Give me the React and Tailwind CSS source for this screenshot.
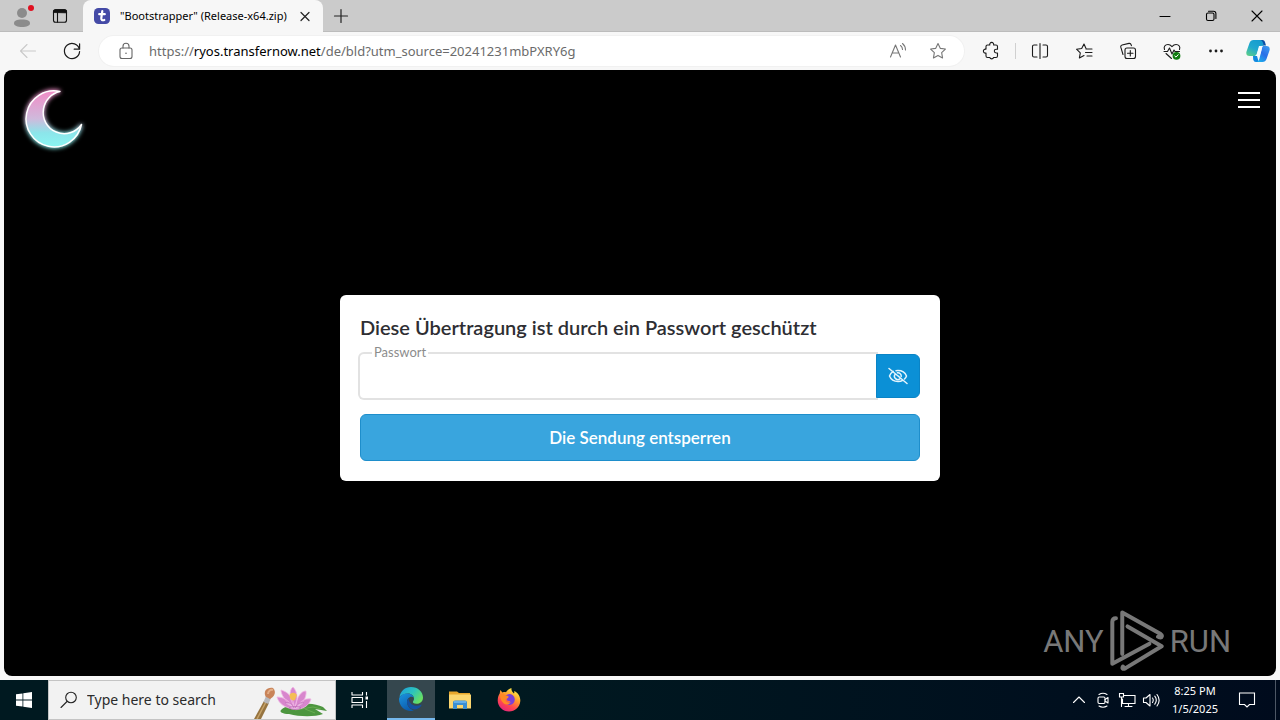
import React from 'react';

function Icon({ children, className = 'size-5', box = '0 0 20 20' }) {
  return (
    <svg
      viewBox={box}
      className={className}
      fill="none"
      stroke="currentColor"
      strokeWidth="1.1"
      strokeLinecap="round"
      strokeLinejoin="round"
      aria-hidden="true"
    >
      {children}
    </svg>
  );
}

function IconButton({ label, className = 'w-11', children }) {
  return (
    <button type="button" aria-label={label} className={`flex h-full shrink-0 items-center justify-center ${className}`}>
      {children}
    </button>
  );
}

function TabStrip() {
  return (
    <header className="flex h-8 shrink-0 bg-[#cbcbcb] shadow-[inset_0_-1px_0_#bcbcbc]">
      <div className="flex w-[83px] shrink-0 items-center pl-[3px]">
        <IconButton label="Profile" className="w-[38px]">
          <svg viewBox="-2 0 26 26" className="size-[26px]" aria-hidden="true">
            <circle cx="11" cy="10" r="5" fill="#8b8b8b" />
            <path d="M3 20.500c0-3 2.500-4 8-4s8 1 8 4c0 2.200-3.500 3.500-8 3.500s-8-1.300-8-3.500z" fill="#8b8b8b" />
            <circle cx="20" cy="5" r="3" fill="#e01020" />
          </svg>
        </IconButton>
        <IconButton label="Tab actions" className="w-[38px]">
          <Icon className="size-4" box="0 0 16 16">
            <rect x="1.500" y="1.800" width="13" height="12.400" rx="2" stroke="#111" />
            <path d="M1.500 4.500V3.800a2 2 0 0 1 2-2h9a2 2 0 0 1 2 2v.9z" fill="#111" stroke="#111" />
            <path d="M5.500 4v10" stroke="#111" />
          </Icon>
        </IconButton>
      </div>
      <div className="flex w-60 shrink-0 items-center rounded-t-lg bg-[#f7f7f7] pl-[11px]">
        <svg viewBox="0 0 16 16" className="size-4 shrink-0" aria-hidden="true">
          <rect width="16" height="16" rx="4.500" fill="#444aa6" />
          <path d="M8.300 3.200 7.300 10c-.3 2 1 2.700 3 2M5.200 6.200h5.600" fill="none" stroke="#fff" strokeWidth="2.200" strokeLinecap="round" />
        </svg>
        <span className="ml-[10px] w-[170px] overflow-hidden text-[11px] whitespace-nowrap text-black">
          "Bootstrapper" (Release-x64.zip)
        </span>
        <IconButton label="Close tab" className="w-9">
          <Icon className="size-3" box="0 0 12 12">
            <path d="M2 2.500l8 8M10 2.500l-8 8" stroke="#222" strokeWidth="1.200" />
          </Icon>
        </IconButton>
      </div>
      <IconButton label="New tab" className="w-9">
        <Icon className="size-4" box="0 0 16 16">
          <path d="M8 1.500v13M1.500 8h13" stroke="#222" strokeWidth="1.200" />
        </Icon>
      </IconButton>
      <div className="ml-auto flex text-black">
        <IconButton label="Minimize" className="w-[46px]">
          <Icon className="size-3" box="0 0 12 12"><path d="M1 6.500h10" /></Icon>
        </IconButton>
        <IconButton label="Restore" className="w-[46px]">
          <Icon className="size-3" box="0 0 12 12">
            <rect x="1.500" y="3" width="7.500" height="7.500" rx="1.500" />
            <path d="M3.500 1.200H8.500a2.400 2.400 0 0 1 2.400 2.400v4.800" />
          </Icon>
        </IconButton>
        <IconButton label="Close" className="w-[46px]">
          <Icon className="size-3" box="0 0 12 12"><path d="M1 1l10 10M11 1L1 11" /></Icon>
        </IconButton>
      </div>
    </header>
  );
}

const STAR = 'M10 2.600l2.250 4.750 5.150.7-3.750 3.650.9 5.200L10 14.400l-4.550 2.500.9-5.200L2.600 8.050l5.150-.7z';

function Toolbar() {
  return (
    <nav aria-label="Browser" className="flex h-[38px] shrink-0 items-center bg-[#f7f7f7] pr-0.5 pl-1.5 text-[#1b1b1b]">
      <IconButton label="Back">
        <Icon className="size-5 text-[#c9c9c9]"><path d="M17.500 10H2.500M9 3.500L2.500 10 9 16.500" /></Icon>
      </IconButton>
      <IconButton label="Refresh">
        <Icon>
          <path d="M17.400 8.200A7.600 7.600 0 1 0 17.600 10.500M17.600 2.800v5.400h-5.400" strokeWidth="1.200" />
        </Icon>
      </IconButton>
      <div className="ml-[5px] flex h-[30px] min-w-0 flex-1 items-center rounded-full bg-white pl-[17px] shadow-[0_0_0_1px_#f1f1f1]">
        <Icon className="size-5 shrink-0 text-[#666]">
          <rect x="4" y="7" width="12" height="10.500" rx="2" />
          <path d="M7 7V5.200a3 3 0 0 1 6 0V7" />
          <circle cx="10" cy="12.200" r=".8" fill="currentColor" stroke="none" />
        </Icon>
        <div className="relative ml-[13px] min-w-0 flex-1 text-[13px] leading-5">
          <input
            aria-label="Address"
            defaultValue="https://ryos.transfernow.net/de/bld?utm_source=20241231mbPXRY6g"
            className="block w-full bg-transparent text-transparent caret-black outline-none"
          />
          <div aria-hidden="true" className="pointer-events-none absolute inset-0 overflow-hidden whitespace-nowrap text-[#6b6b6b]">
            https://<span className="text-black">ryos.transfernow.net</span>/de/bld?utm_source=20241231mbPXRY6g
          </div>
        </div>
        <IconButton label="Read aloud" className="w-10">
          <Icon className="size-5 text-[#777]">
            <path d="M2.500 16L7.500 4l5 12M4.300 12h6.400M12.500 4.500q2 1.500 2 4M14.500 2.500q3 2.500 3 6.500" />
          </Icon>
        </IconButton>
        <IconButton label="Add to favorites" className="mr-1.5 w-10">
          <Icon className="size-5 text-[#777]"><path d={STAR} /></Icon>
        </IconButton>
      </div>
      <div className="ml-[5px] flex h-full items-center">
        <IconButton label="Extensions">
          <Icon>
            <path d="M6.500 4h2.300a2 2 0 1 1 3.800 0H15a1.500 1.500 0 0 1 1.500 1.500v2.700h-1.300a1.900 1.900 0 0 0 0 3.800h1.300v3a1.500 1.500 0 0 1-1.500 1.500h-2.400a2 2 0 0 1-3.800 0H6.500A1.500 1.500 0 0 1 5 15v-3a2 2 0 1 1 0-3.800V5.500A1.500 1.500 0 0 1 6.500 4z" />
          </Icon>
        </IconButton>
        <span className="mx-0.5 h-4 w-px bg-[#d0d0d0]" />
        <IconButton label="Split screen">
          <Icon><path d="M7 4H4a1.500 1.500 0 0 0-1.500 1.500v9A1.500 1.500 0 0 0 4 16h3M13 4h3a1.500 1.500 0 0 1 1.500 1.500v9A1.500 1.500 0 0 1 16 16h-3M10 2.500v15" /></Icon>
        </IconButton>
        <IconButton label="Favorites">
          <Icon><path d="M12 7.500L10 3 7.700 7.500l-5.200.7 3.800 3.600-.9 5.100L10 14.500M12 8h6M11.500 11.500H18M13 15h5" /></Icon>
        </IconButton>
        <IconButton label="Collections">
          <Icon>
            <rect x="7" y="7" width="10.500" height="10.500" rx="2" />
            <path d="M12.300 9.500v5.500M9.500 12.300H15M5 13.500L2.800 6.200a1.800 1.800 0 0 1 1.300-2.200l6.900-1.600a2 2 0 0 1 2.200 1.400l.2.800" />
          </Icon>
        </IconButton>
        <IconButton label="Browser essentials">
          <Icon>
            <path d="M2.500 8.500C1.500 6 3 3.500 6 3.500c2 0 3 1 4 2.200 1-1.200 2-2.200 4-2.200 3 0 4.500 2.500 3.500 5M4 12.500L9.500 17.500M2 10.500h3.500l2-3.500 2.500 6 2-4 1 1.500h4.500" />
            <circle cx="14.500" cy="14.800" r="3.900" fill="#107c10" stroke="none" />
            <path d="M12.800 15l1.200 1.100 2.200-2.400" stroke="#fff" strokeWidth="1" />
          </Icon>
        </IconButton>
        <IconButton label="Settings and more">
          <Icon>
            <g fill="currentColor" stroke="none">
              <circle cx="4.500" cy="10" r="1.400" /><circle cx="10" cy="10" r="1.400" /><circle cx="15.500" cy="10" r="1.400" />
            </g>
          </Icon>
        </IconButton>
        <IconButton label="Copilot" className="w-10">
          <svg viewBox="0 0 24 24" className="size-6" aria-hidden="true">
            <defs>
              <linearGradient id="cpA" x1="0.700" y1="0" x2="0.100" y2="1">
                <stop offset="0" stopColor="#169ccf" /><stop offset="0.500" stopColor="#20a8cf" /><stop offset="1" stopColor="#5ccf87" />
              </linearGradient>
              <linearGradient id="cpB" x1="0.900" y1="0" x2="0.200" y2="1">
                <stop offset="0" stopColor="#3d9cf0" /><stop offset="0.500" stopColor="#2a6fe8" /><stop offset="1" stopColor="#1bb2ec" />
              </linearGradient>
            </defs>
            <path d="M13 1h3.500a2.500 2.500 0 0 1 2.400 1.800L20 6.500h-4.500z" fill="#0b4fa5" />
            <path d="M7.500 1H14c1.800 0 2.500 1.500 3 3l.8 2.500c-3 0-4.500 1-5.300 3.500l-1.300 4.500c-.6 2-1.500 2.500-3 2.500H3.500C.8 17-.2 15 .5 12.500l3-8.500C4.200 2 5.500 1 7.500 1z" fill="url(#cpA)" />
            <path d="M7 17h4l1 3.500c.5 1.500.8 2 1.500 2.500H10c-1.500 0-2.300-.8-2.800-2.500z" fill="#1289e0" />
            <path d="M16.500 7H20.500c2.700 0 3.700 2 3 4.500l-3 8.500c-.7 2-2 3-4 3H10c2 0 2.800-1 3.300-3l2.200-8.500c.5-2 .5-3.500 1-4.500z" fill="url(#cpB)" />
            <path d="M13 7h4c-1 1-1.200 2.500-1.800 4.500l-1 3.500c-.5 1.500-1.500 2-3 2H9c1.500-1 1.800-2 2.300-4z" fill="#f4fbff" />
          </svg>
        </IconButton>
      </div>
    </nav>
  );
}

function MoonLogo() {
  const d = 'M60 91.500A28 28 0 1 0 81.500 124.500A21 21 0 0 1 43.500 109A21 21 0 0 1 60 91.500z';
  return (
    <svg viewBox="18 84 72 72" className="size-[72px]" role="img" aria-label="Moon logo">
      <defs>
        <linearGradient id="moon" x1="0" y1="0" x2="0" y2="1">
          <stop offset="0.050" stopColor="#ee90c8" />
          <stop offset="0.500" stopColor="#cfbadc" />
          <stop offset="0.750" stopColor="#8ce5ea" />
          <stop offset="1" stopColor="#8af5f2" />
        </linearGradient>
        <filter id="glow" x="-30%" y="-30%" width="160%" height="160%"><feGaussianBlur stdDeviation="2" /></filter>
      </defs>
      <path d={d} fill="url(#moon)" stroke="url(#moon)" strokeWidth="3" filter="url(#glow)" />
      <path d={d} fill="url(#moon)" stroke="#fff" strokeWidth="1.500" strokeLinejoin="round" />
    </svg>
  );
}

function PasswordCard() {
  return (
    <form onSubmit={(e) => e.preventDefault()} className="w-full max-w-[600px] rounded-md bg-white p-5 font-['Lato',sans-serif]">
      <h1 className="text-xl leading-6 font-semibold text-[#2e2e33]">Diese Übertragung ist durch ein Passwort geschützt</h1>
      <div className="relative mt-[15px] flex h-11">
        <input id="password" type="password" className="min-w-0 flex-1 rounded-l bg-white px-3 text-base ring-2 ring-[#e2e2e2] outline-none" />
        <label htmlFor="password" className="absolute -top-2.5 left-3 bg-white px-0.5 text-[13px] leading-4 text-[#8c8c8c]">Passwort</label>
        <button type="button" aria-label="Passwort anzeigen" className="relative flex w-11 items-center justify-center rounded-r-md border border-[#0a84c6] bg-[#0b90d6] text-[#e4f4fc]">
          <Icon className="size-5">
            <g strokeWidth="1.500">
              <path d="M5.200 5.300C3.500 6.400 2.200 8 1.500 10c1.500 3.700 4.700 5.500 8.500 5.500 1.800 0 3.400-.4 4.700-1.200M8 4.700A9 9 0 0 1 10 4.500c3.800 0 7 1.800 8.500 5.500-.4 1.100-1.100 2.100-2 3" />
              <path d="M7.200 8.200A3.300 3.300 0 0 0 12 12.700M9.500 6.800a3.300 3.300 0 0 1 3.700 3.700M9.500 9.500l1.500 1.200M1 2.500L19 17.500" />
            </g>
          </Icon>
        </button>
      </div>
      <button type="submit" className="mt-4 block h-[47px] w-full rounded-md border border-[#1e8ecb] bg-[#39a5de] text-[17px] font-semibold text-white">
        Die Sendung entsperren
      </button>
    </form>
  );
}

function Watermark() {
  return (
    <div className="pointer-events-none absolute right-[45px] bottom-1 flex items-center gap-1.5 font-['Roboto',sans-serif] text-[31px] leading-none text-[#787878]">
      <span>ANY</span>
      <svg viewBox="29 14 163 186" className="h-[62px] w-[54px]" fill="none" stroke="currentColor" strokeWidth="12" strokeLinejoin="round" strokeLinecap="round" aria-hidden="true">
        <path d="M47 38C39 38 36 41 36 49V176L148 115" />
        <path d="M66 146V21L182 86C188 90 186 97 179 96L174 94" />
        <path d="M82 63L185 123L76 189C67 194 65 189 68 184" />
      </svg>
      <span>RUN</span>
    </div>
  );
}

function LotusArt() {
  return (
    <svg viewBox="0 0 90 38" className="h-full w-[90px] shrink-0" aria-hidden="true">
      <path d="M36 29C40 24 50 25 60 23C66 22 73 24 78 26L82 30L70 28L78 33C70 36 55 36 44 33C38 33 34 31 36 29z" fill="#4d963f" />
      <path d="M50 29L68 26L76 28M60 28L70 32" stroke="#6fb156" strokeWidth="0.800" fill="none" />
      <path d="M49 28C40 27 34 23 32 16C38 16 44 19 48 26C39 19 36 13 36 9C43 11 48 16 49 25C44 17 44 9 48 6C53 11 53 19 50 26C52 16 56 10 61 10C62 17 57 23 51 27C55 20 60 17 66 18C64 25 57 29 49 28z" fill="#d886cd" stroke="#f0b8e4" strokeWidth="0.800" />
      <path d="M40 22C45 21 47 23 49 27M59 22C54 21 52 24 50 27M44 27C47 25 53 25 56 27C53 29 47 29 44 27z" fill="#eab4e2" stroke="#b65caf" strokeWidth="0.600" />
      <path d="M44.500 14C46 11 50 11 52 14L50 19C48 20 46 19 45 17z" fill="#f4bd55" />
      <path d="M9 38L19 20L24 22L16 38z" fill="#967440" />
      <path d="M12 38L21 21" stroke="#c7a369" strokeWidth="1.500" />
      <path d="M18.500 21L21 15L26 17L23.500 23z" fill="#b8b9bd" />
      <path d="M20.500 15.500C18 10 22 6 28 7C32 11 29 16 25 18z" fill="#c98459" />
      <path d="M23 13C23 10 26 8 28 9" stroke="#e2ad86" strokeWidth="2" fill="none" />
    </svg>
  );
}

function EdgeLogo() {
  return (
    <svg viewBox="0 0 24 24" className="size-6" aria-hidden="true">
      <defs>
        <linearGradient id="edgeTop" x1="0" y1="0" x2="1" y2="0.600">
          <stop offset="0" stopColor="#1c9de0" /><stop offset="0.550" stopColor="#2cc3bd" /><stop offset="1" stopColor="#69df61" />
        </linearGradient>
        <linearGradient id="edgeSide" x1="0" y1="0" x2="0.500" y2="1">
          <stop offset="0" stopColor="#1b95df" /><stop offset="1" stopColor="#0c5cae" />
        </linearGradient>
      </defs>
      <path d="M.5 10C1.500 4 6 0 12 0c7 0 12 5 12 10.500 0 4-3 6.300-6.500 6.300-3 0-4-1.300-3.500-2.300.6-.8 1-1.500 1-2.700 0-2.800-2.500-5.300-6-5.300C5.500 6.500 2.500 8 .5 10z" fill="url(#edgeTop)" />
      <path d="M0 12C.5 8.500 4.500 6.500 8.500 6.500c3 0 5.500 1.500 6.200 3.800C11 8.500 8 11.500 8 15c0 4 3 7.500 7 8.300-1 .5-2 .7-3 .7C5 24 0 18.500 0 12z" fill="url(#edgeSide)" />
      <path d="M9.500 11.500C8 13 7.500 15 8.500 17.500c1.500 4 6 5.800 9.500 4.500 2-.8 3.500-2.200 4.500-3.800.3-.5-.2-.7-.6-.5-5.400 2.600-11.400.3-12.400-6.200z" fill="#1450a0" />
    </svg>
  );
}

function FirefoxLogo() {
  return (
    <svg viewBox="0 0 24 24" className="size-6" aria-hidden="true">
      <defs>
        <linearGradient id="fox" x1="0.800" y1="0" x2="0.250" y2="1">
          <stop offset="0.050" stopColor="#fff04a" /><stop offset="0.400" stopColor="#ff9a2c" /><stop offset="0.700" stopColor="#ff4550" /><stop offset="1" stopColor="#e2237f" />
        </linearGradient>
      </defs>
      <path d="M14.500 0c-.5 2.500 1 3.800 2.500 5.500.5-1 .3-1.500.2-2.500C21.500 5 23.500 9 23.300 13c-.4 6-5.300 10.500-11.300 10.500S.7 18.600.7 12.500c0-3.500 1-5.500 2-7 .2-1 .3-2.500.9-3.500.6 1.200 1.200 1.800 2 2.500C7 3.800 8 4 9 4.200 10.500 2 12.500.5 14.500 0z" fill="url(#fox)" />
      <path d="M8 8.500c1.500-2.500 5-3.300 7.500-1.500 2.700 2 3 6 .8 8.300-2.300 2.400-6.300 2-8-.7 2 .8 4.300.2 5-1.300-1.300-.3-3-.3-3.500-1.500-.4-1.200 1.200-1.600 1.800-2.300-1-.8-2.200-1-3.600-1z" fill="#7a40d8" />
      <path d="M3 6.500C5 5 7.500 5.500 8.300 7.500c1.500 0 2.700.3 3.500 1-1 .8-2.500 1.200-3 2.500-1 2.500 2 4.500 5 3-1 2.500-4.500 3.500-7 1.500C4 13 3 10 3 6.500z" fill="#ff8a25" />
    </svg>
  );
}

function Taskbar() {
  return (
    <footer className="flex h-10 shrink-0 bg-linear-to-r from-[#001920] from-40% to-[#000b1d] text-white">
      <IconButton label="Start" className="w-12">
        <svg viewBox="0 0 16 16" className="size-4" fill="#fff" aria-hidden="true">
          <path d="M0 2.300L6.500 1.400V7.600H0zM7.300 1.300L16 0v7.600H7.300zM0 8.400h6.500v6.200L0 13.700zM7.300 8.400H16V16l-8.700-1.300z" />
        </svg>
      </IconButton>
      <div className="flex w-72 shrink-0 items-center border border-[#c4c4c4] bg-[#f2f2f2] pl-2.5 text-[#222]">
        <Icon className="size-5 shrink-0"><circle cx="12" cy="7.500" r="5.300" /><path d="M8 11.500L2 17.500" /></Icon>
        <input aria-label="Search" placeholder="Type here to search" className="ml-2 min-w-0 flex-1 bg-transparent text-sm outline-none placeholder:text-[#2b2b2b]" />
        <LotusArt />
      </div>
      <IconButton label="Task view" className="mr-[3px] w-12">
        <Icon className="size-5">
          <g strokeLinecap="butt">
            <path d="M2 2v3h10.500V2M2 18v-3h10.500v3M2 7.500h10.500v5H2zM16.500 2v3.500M16.500 11v7" />
            <path d="M15.500 6.500h2.500v3h-2.500z" fill="currentColor" stroke="none" />
          </g>
        </Icon>
      </IconButton>
      <div className="flex gap-px">
        <IconButton label="Microsoft Edge" className="w-12 border-b-2 border-[#76b9ed] bg-[#35474e]"><EdgeLogo /></IconButton>
        <IconButton label="File Explorer" className="w-12">
          <svg viewBox="0 0 24 24" className="size-6" aria-hidden="true">
            <path d="M1 3.500h8l2 1.500h11v3H1z" fill="#e8a72c" />
            <path d="M1 6.500h22v14H1z" fill="#fbd66f" />
            <path d="M5 21v-6.500a2 2 0 0 1 2-2h10a2 2 0 0 1 2 2V21h-4v-4H9v4z" fill="#3b8fd3" />
            <path d="M6 14h12" stroke="#75baf0" strokeWidth="1.500" />
          </svg>
        </IconButton>
        <IconButton label="Firefox" className="w-12"><FirefoxLogo /></IconButton>
      </div>
      <div className="ml-auto flex">
        <IconButton label="Show hidden icons" className="w-6">
          <Icon className="size-4" box="0 0 16 16"><path d="M2.500 10.500L8 5l5.500 5.500" /></Icon>
        </IconButton>
        <IconButton label="Meet now" className="w-6">
          <Icon className="size-4" box="0 0 16 16">
            <rect x="3" y="5" width="7" height="6.500" rx="1.200" />
            <path d="M10 7.500l3-2v5.500l-3-2M4 2.500q4-2.500 8 0M4 14q4 2.500 8 0" />
          </Icon>
        </IconButton>
        <IconButton label="Network" className="w-6">
          <Icon className="h-4 w-[18px]" box="0 0 18 16">
            <path d="M5.500 3.500H17v8H4.500V7M10.500 11.500V14M7 14.500h7M1.500 1.500h4v3.500h-4zM3.500 5v9.500" strokeLinejoin="miter" />
          </Icon>
        </IconButton>
        <IconButton label="Volume" className="w-6">
          <Icon className="h-4 w-[18px]" box="0 0 18 16">
            <path d="M1.500 6v4.500H4L8 14V2.500L4 6zM10.500 6q1.500 2 0 4.500M12.800 4.200q3 4 0 8M15 2.500q4.300 5.700 0 11.500" />
          </Icon>
        </IconButton>
        <button type="button" className="w-16 text-center text-[11px] leading-[18px]">
          <time className="block">8:25 PM</time>
          <time className="block">1/5/2025</time>
        </button>
        <IconButton label="Notifications" className="mr-2 w-10">
          <Icon className="size-[18px]" box="0 0 18 18"><path d="M1.500 2h15v11.500h-5L9 16l-2.500-2.500h-5z" strokeLinejoin="miter" /></Icon>
        </IconButton>
        <button type="button" aria-label="Show desktop" className="w-[5px] border-l border-[#4d5765]" />
      </div>
    </footer>
  );
}

export default function App() {
  return (
    <div className="flex min-h-screen flex-col bg-[#f7f7f7] font-['Noto_Sans',sans-serif]">
      <TabStrip />
      <Toolbar />
      <main className="relative mx-1 mb-1 flex flex-1 flex-col rounded-lg bg-black">
        <div className="flex items-start justify-between pt-3.5 pr-4 pl-3.5">
          <MoonLogo />
          <button type="button" aria-label="Menü" className="mt-1.5 flex h-5 w-[22px] flex-col items-center justify-between py-0.5">
            <span className="h-0.5 w-full bg-white" />
            <span className="h-0.5 w-full bg-white" />
            <span className="h-0.5 w-full bg-white" />
          </button>
        </div>
        <div className="flex flex-1 items-center justify-center px-4 pb-14">
          <PasswordCard />
        </div>
        <Watermark />
      </main>
      <Taskbar />
    </div>
  );
}
